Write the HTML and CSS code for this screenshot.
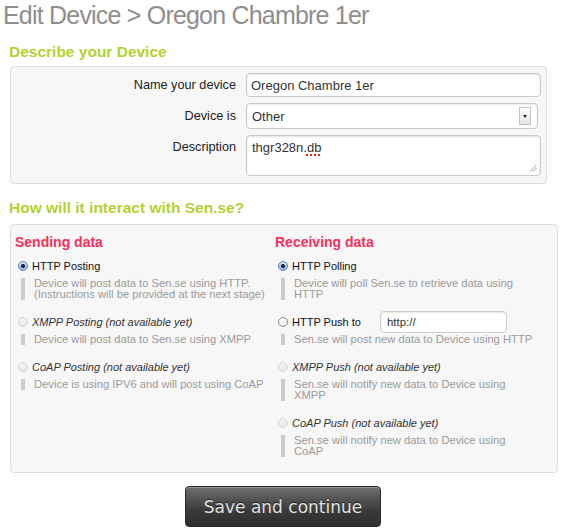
FILE: index.html
```html
<!DOCTYPE html>
<html lang="en">
<head>
<meta charset="utf-8">
<title>Edit Device</title>
<link rel="stylesheet" href="styles.css">
</head>
<body>
<div class="page">
  <h1 class="title">Edit Device &gt; Oregon Chambre 1er</h1>

  <h2 class="section-title first">Describe your Device</h2>
  <div class="panel describe">
    <label class="field-label" for="name">Name your device</label>
    <input class="text-input" id="name" type="text" value="Oregon Chambre 1er">

    <span class="field-label">Device is</span>
    <div class="select">
      <span class="select-value">Other</span>
      <span class="select-arrow"><span class="tri"></span></span>
    </div>

    <span class="field-label top">Description</span>
    <div class="textarea">thgr328n.<span class="misspelled">db</span>
      <svg class="grip" width="8" height="8" viewBox="0 0 8 8"><path d="M1 7.5 L7.5 1 M4 7.5 L7.5 4" stroke="#9a9a9a" stroke-width="1" fill="none"/></svg>
    </div>
  </div>

  <h2 class="section-title">How will it interact with Sen.se?</h2>
  <div class="panel interact">
    <div class="column">
      <h3 class="col-title">Sending data</h3>
      <div class="option">
        <div class="opt-row"><input class="radio" type="radio" name="send" checked><span class="opt-label">HTTP Posting</span></div>
        <p class="opt-desc">Device will post data to Sen.se using HTTP. (Instructions will be provided at the next stage)</p>
      </div>
      <div class="option">
        <div class="opt-row"><input class="radio" type="radio" name="send" disabled><span class="opt-label off">XMPP Posting (not available yet)</span></div>
        <p class="opt-desc">Device will post data to Sen.se using XMPP</p>
      </div>
      <div class="option">
        <div class="opt-row"><input class="radio" type="radio" name="send" disabled><span class="opt-label off">CoAP Posting (not available yet)</span></div>
        <p class="opt-desc">Device is using IPV6 and will post using CoAP</p>
      </div>
    </div>
    <div class="column">
      <h3 class="col-title">Receiving data</h3>
      <div class="option">
        <div class="opt-row"><input class="radio" type="radio" name="recv" checked><span class="opt-label">HTTP Polling</span></div>
        <p class="opt-desc">Device will poll Sen.se to retrieve data using HTTP</p>
      </div>
      <div class="option">
        <div class="opt-row"><input class="radio" type="radio" name="recv"><span class="opt-label">HTTP Push to</span><input class="url-input" type="text" value="http://"></div>
        <p class="opt-desc">Sen.se will post new data to Device using HTTP</p>
      </div>
      <div class="option">
        <div class="opt-row"><input class="radio" type="radio" name="recv" disabled><span class="opt-label off">XMPP Push (not available yet)</span></div>
        <p class="opt-desc">Sen.se will notify new data to Device using XMPP</p>
      </div>
      <div class="option">
        <div class="opt-row"><input class="radio" type="radio" name="recv" disabled><span class="opt-label off">CoAP Push (not available yet)</span></div>
        <p class="opt-desc">Sen.se will notify new data to Device using CoAP</p>
      </div>
    </div>
  </div>

  <div class="actions">
    <button class="btn" type="button">Save and continue</button>
  </div>
</div>
</body>
</html>
```

FILE: styles.css
```css
* { box-sizing: border-box; }

html, body {
  margin: 0;
  padding: 0;
  background: #ffffff;
}

body {
  font-family: "Liberation Sans", Arial, Helvetica, sans-serif;
  color: #333;
}

.page {
  width: 566px;
  padding: 0 0 0 10px;
}

.title {
  margin: 0 0 0 -7px;
  font-size: 25px;
  line-height: 30px;
  font-weight: 400;
  letter-spacing: -0.8px;
  color: #8e8e8e;
}

.section-title {
  margin: 15px 0 7px -1px;
  font-size: 15.5px;
  line-height: 18px;
  font-weight: 700;
  color: #b4d130;
}

.section-title.first {
  margin-top: 13px;
  margin-bottom: 5px;
}

.panel {
  background: #f7f7f7;
  border: 1px solid #dcdcdc;
  border-radius: 4px;
}

/* Describe panel */
.describe {
  width: 537px;
  display: grid;
  grid-template-columns: 225px 1fr;
  column-gap: 10px;
  row-gap: 6px;
  padding: 6px 5px 7px 0;
}

.field-label {
  align-self: center;
  text-align: right;
  font-size: 12.7px;
  line-height: 16px;
  color: #222;
}

.field-label.top {
  align-self: start;
  padding-top: 4px;
}

.text-input {
  height: 24px;
  width: 100%;
  margin: 0;
  padding: 0 4px;
  font-family: "Liberation Sans", Arial, sans-serif;
  font-size: 13px;
  color: #333;
  background: #fff;
  border: 1px solid #c9c9c9;
  border-radius: 4px;
  box-shadow: inset 0 1px 2px rgba(0,0,0,0.12);
  outline: none;
}

.select {
  height: 26px;
  width: calc(100% - 3px);
  display: flex;
  align-items: center;
  justify-content: space-between;
  padding: 0 6px 0 5px;
  background: #fff;
  border: 1px solid #c9c9c9;
  border-radius: 4px;
  box-shadow: inset 0 1px 2px rgba(0,0,0,0.08);
}

.select-value {
  font-size: 13px;
  color: #333;
}

.select-arrow {
  width: 12px;
  height: 18px;
  display: flex;
  align-items: center;
  justify-content: center;
  border: 1px solid #c4c4c4;
  background: linear-gradient(#ffffff, #e4e4e4);
}

.tri {
  width: 0;
  height: 0;
  border-left: 2.5px solid transparent;
  border-right: 2.5px solid transparent;
  border-top: 3px solid #222;
}

.textarea {
  position: relative;
  height: 41px;
  padding: 4px 5px;
  font-size: 13px;
  line-height: 16px;
  color: #333;
  background: #fff;
  border: 1px solid #c9c9c9;
  border-radius: 4px;
  box-shadow: inset 0 1px 2px rgba(0,0,0,0.12);
}

.misspelled {
  text-decoration: underline dotted #e02020;
  text-decoration-thickness: 2px;
  text-underline-offset: 2px;
}

.grip {
  position: absolute;
  right: 3px;
  bottom: 3px;
}

/* Interact panel */
.interact {
  width: 548px;
  display: grid;
  grid-template-columns: 260px 260px;
  padding: 8px 22px 0 4px;
}

.col-title {
  margin: 0 0 8px;
  font-size: 14px;
  line-height: 18px;
  font-weight: 700;
  color: #f5305e;
}

.option {
  margin-bottom: 15px;
}

.opt-row {
  display: flex;
  align-items: center;
  height: 14px;
}

.radio {
  appearance: none;
  -webkit-appearance: none;
  flex: none;
  width: 10px;
  height: 10px;
  margin: 0 4px 0 3px;
  border-radius: 50%;
  border: 1px solid #8a8a8a;
  background: linear-gradient(#ffffff, #ececec);
}

.radio:checked {
  border-color: #5f80ad;
  background:
    radial-gradient(circle, #1b2944 0 1.6px, rgba(27,41,68,0) 2.4px),
    linear-gradient(#dce8f7, #8fb2df);
}

.radio:disabled {
  border-color: #d4d4d4;
  background: linear-gradient(#f4f4f4, #e9e9e9);
}

.opt-label {
  font-size: 11px;
  line-height: 14px;
  color: #111;
  white-space: nowrap;
}

.opt-label.off {
  font-style: italic;
  color: #333;
}

.url-input {
  width: 127px;
  height: 22px;
  margin: -4px 0 -4px 19px;
  padding: 0 6px;
  font-family: "Liberation Sans", Arial, sans-serif;
  font-size: 11.5px;
  color: #333;
  background: #fff;
  border: 1px solid #cfcfcf;
  border-radius: 4px;
  box-shadow: inset 0 1px 2px rgba(0,0,0,0.1);
  outline: none;
}

.opt-desc {
  margin: 5px 0 0 6px;
  padding-left: 9px;
  border-left: 4px solid #cccccc;
  font-size: 11.2px;
  line-height: 11px;
  color: #9a9a9a;
}

/* Button */
.actions {
  display: flex;
  justify-content: center;
  padding: 13px 10px 0 0;
}

.btn {
  width: 196px;
  height: 41px;
  padding: 0;
  font-family: "DejaVu Sans", "Lucida Grande", sans-serif;
  font-size: 17px;
  color: #e2e2e2;
  text-shadow: 0 -1px 0 rgba(0,0,0,0.6);
  background: linear-gradient(#6f6f6f, #3a3a3a 60%, #2e2e2e);
  border: 1px solid #2a2a2a;
  border-radius: 4px;
  box-shadow: inset 0 1px 0 rgba(255,255,255,0.25);
}
```
